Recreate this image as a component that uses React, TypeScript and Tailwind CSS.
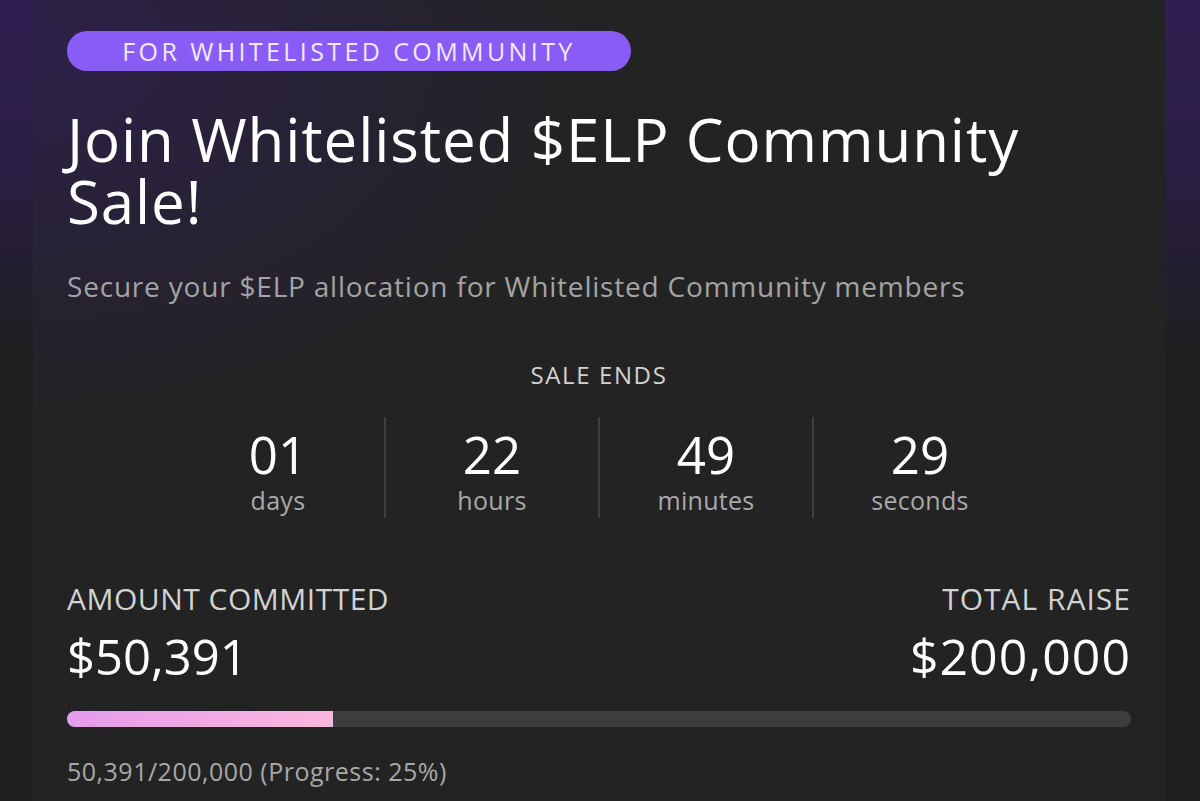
import React from "react";

const font = { fontFamily: "'Open Sans', 'Noto Sans', sans-serif" };

function Unit({ value, label }: { value: string; label: string }) {
  return (
    <div className="flex flex-col items-center pt-[13px]">
      <div className="text-[51px] leading-[48px] text-white">{value}</div>
      <div className="mt-[8px] text-[25px] leading-[28px] tracking-[0.3px] text-[#a9a9a9]">{label}</div>
    </div>
  );
}

function Divider() {
  return <div className="w-[2px] self-stretch bg-[#3f3f3f]" />;
}

export default function App() {
  return (
    <div
      className="h-[801px] w-[1200px] overflow-hidden bg-[#1f1f1f] bg-[linear-gradient(180deg,#2f1f52_0%,#2a1e45_20%,#1f1f1f_45%)]"
      style={font}
    >
      <div className="ml-[33px] mr-[35px] -mt-[20px] h-[860px] rounded-[24px] bg-[#232323] bg-[radial-gradient(ellipse_560px_380px_at_0%_8%,#2d2048_0%,#272234_55%,#232323_100%)] px-[34px] pt-[51px]">
        <div className="inline-flex h-[40px] w-[564px] items-center justify-center rounded-full bg-[#8a5cf6] text-[25px] leading-[30px] tracking-[3.4px] text-[#f1e9ff]">
          FOR WHITELISTED COMMUNITY
        </div>
        <h1 className="mt-[37px] text-[60px] font-normal leading-[62px] tracking-[0.9px] text-white">
          Join Whitelisted $ELP Community
          <br />
          Sale!
        </h1>
        <p className="mt-[37px] text-[28px] leading-[34px] tracking-[0.8px] text-[#a3a3a3]">
          Secure your $ELP allocation for Whitelisted Community members
        </p>
        <div className="mt-[58px] text-center text-[24px] leading-[28px] tracking-[1.6px] text-[#d2d2d2]">
          SALE ENDS
        </div>
        <div className="mx-auto mt-[28px] grid h-[101px] w-[854px] grid-cols-[1fr_2px_1fr_2px_1fr_2px_1fr]">
          <Unit value="01" label="days" />
          <Divider />
          <Unit value="22" label="hours" />
          <Divider />
          <Unit value="49" label="minutes" />
          <Divider />
          <Unit value="29" label="seconds" />
        </div>
        <div className="mt-[65px] flex items-start justify-between">
          <div>
            <div className="text-[30px] leading-[32px] tracking-[0.5px] text-[#d2d2d2]">AMOUNT COMMITTED</div>
            <div className="mt-[15px] text-[49px] leading-[52px] text-white">$50,391</div>
          </div>
          <div className="text-right">
            <div className="text-[30px] leading-[32px] tracking-[1px] text-[#d2d2d2]">TOTAL RAISE</div>
            <div className="mt-[15px] text-[50px] leading-[52px] tracking-[1px] text-white">$200,000</div>
          </div>
        </div>
        <div className="mt-[29px] h-[16px] w-full overflow-hidden rounded-full bg-[#3d3d3d]">
          <div className="h-full w-[25%] bg-[linear-gradient(90deg,#e49ced,#fab7dc)]" />
        </div>
        <div className="mt-[30px] text-[25px] leading-[28px] tracking-[0.5px] text-[#a8a8a8]">
          50,391/200,000 (Progress: 25%)
        </div>
      </div>
    </div>
  );
}
